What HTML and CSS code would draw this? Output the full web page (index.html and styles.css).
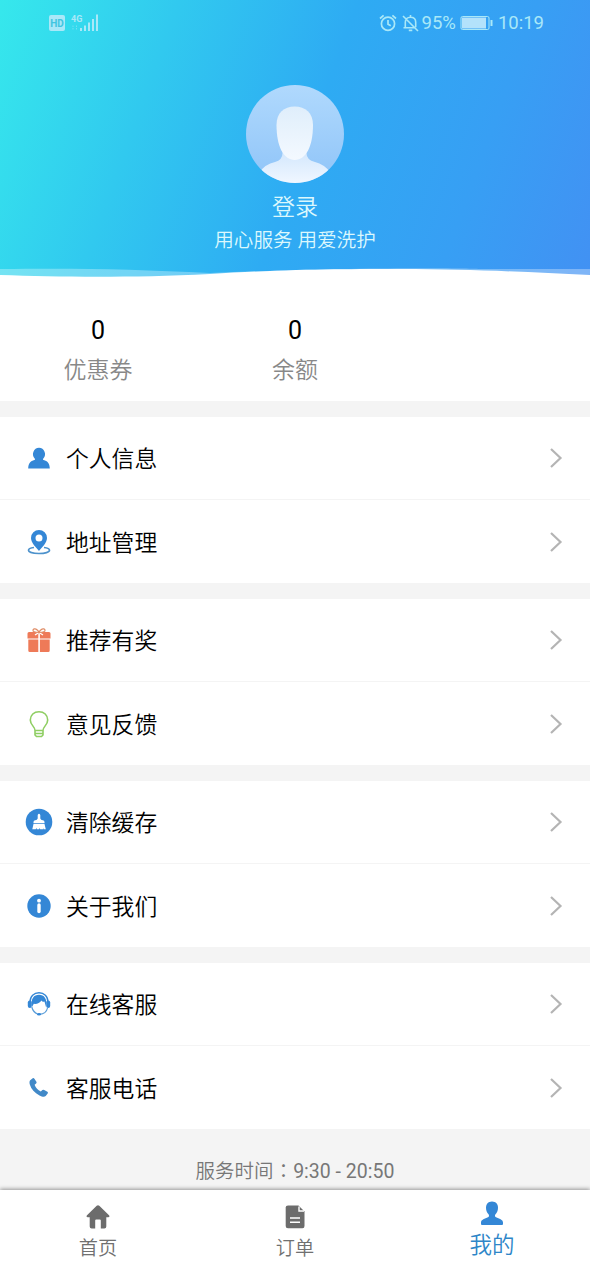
FILE: index.html
```html
<!DOCTYPE html>
<html lang="zh-CN">
<head>
<meta charset="utf-8">
<title>我的</title>
<link rel="stylesheet" href="styles.css">
</head>
<body>
<div class="app">
  <header class="hero">
    <svg class="wave" viewBox="0 0 590 12" preserveAspectRatio="none">
      <path d="M0 3C75 2 135 3 210 7C350 1 460 2 480 3H590V12H0Z" fill="#fff" fill-opacity=".32"/>
      <path d="M0 9C60 11 130 12 210 8C290 3 350 3 400 3C470 3 525 6 590 9V12H0Z" fill="#fff"/>
    </svg>
    <div class="status">
      <svg class="signal" width="52" height="20" viewBox="0 0 52 20">
        <rect x="1" y="2" width="16" height="16" rx="2" fill="currentColor"/>
        <text x="9" y="13.500" class="hd" text-anchor="middle">HD</text>
        <text x="23" y="8.500" class="net">4G</text>
        <path d="M25 12.500v4M28.500 12.500v4" stroke="currentColor" stroke-dasharray="1.500 1" opacity=".5"/>
        <path d="M33 15v3M37 12.500v5.500M41 9.500v8.500M45 6v12M49 1.500v16.500" stroke="currentColor" stroke-width="2"/>
      </svg>
      <div class="status-right">
        <svg width="18" height="18" viewBox="0 0 18 18" fill="none" stroke="currentColor" stroke-width="1.700"><circle cx="9" cy="9.800" r="6.600"/><path d="M9 6v4.200l2.800 1.600M1 4.500 4.600 1.300M17 4.500l-3.600-3.200"/></svg>
        <svg class="bell" width="17" height="18" viewBox="0 0 17 18" fill="none" stroke="currentColor" stroke-width="1.600"><path d="M3.300 13.500V8.200c0-3 2-5 5.200-5s5.200 2 5.200 5v5M1.500 13.700h11.700M8.500 1v2M6.800 16.400h3.500M1 2l15 15"/></svg>
        <span class="pct">95%</span>
        <svg class="battery" width="33" height="16" viewBox="0 0 33 16"><rect x="1" y="1.500" width="28" height="13" rx="1.500" fill="none" stroke="currentColor" stroke-width="1"/><rect x="2" y="2.500" width="24" height="11" fill="#b3e2fb"/><path d="M31.500 5v6" stroke="currentColor" stroke-width="2"/></svg>
        <span class="clock">10:19</span>
      </div>
    </div>
    <svg class="avatar" width="98" height="98" viewBox="0 0 98 98">
      <defs>
        <linearGradient id="disc" x1="0" y1="0" x2="0" y2="1"><stop offset="0" stop-color="#b0d9fd"/><stop offset="1" stop-color="#8fc4f8"/></linearGradient>
        <linearGradient id="bust" x1="0" y1="0" x2="0" y2="1"><stop offset="0" stop-color="#dfeefb"/><stop offset="1" stop-color="#f4f9ff"/></linearGradient>
        <linearGradient id="neck" x1="0" y1="0" x2="0" y2="1"><stop offset="0" stop-color="#cbe3fc"/><stop offset="1" stop-color="#f0f7ff"/></linearGradient>
        <clipPath id="round"><circle cx="49" cy="49" r="49"/></clipPath>
      </defs>
      <g clip-path="url(#round)">
        <rect width="98" height="98" fill="url(#disc)"/>
        <path d="M36.500 58V68Q36.500 75 29 77Q19 79 13 88V98H85V88Q78 79 69 77Q60.500 75 60.500 68V58Z" fill="url(#neck)"/>
        <path d="M30.500 40C30.500 28 38 21.500 48.700 21.500S67 28 67 40C67 61 60 75 48.700 75S30.500 61 30.500 40Z" fill="url(#bust)"/>
      </g>
    </svg>
    <div class="login">登录</div>
    <div class="slogan">用心服务 用爱洗护</div>
  </header>

  <section class="stats">
    <div class="stat"><b>0</b><span>优惠券</span></div>
    <div class="stat"><b>0</b><span>余额</span></div>
    <div class="stat"></div>
  </section>

  <section class="group">
    <div class="row">
      <svg class="icon" viewBox="0 0 28 28" fill="#3487d6"><path d="M14 3.800a6.300 6.300 0 0 1 4.300 10.600c-.7 1-.2 1.500 1 1.900 3.600 1.200 5.300 3.400 5.500 8.100H3.200c.2-4.700 1.900-6.900 5.500-8.100 1.200-.4 1.700-.9 1-1.900A6.300 6.300 0 0 1 14 3.800Z"/></svg>
      <span>个人信息</span><svg class="arrow" viewBox="0 0 14 22"><path d="M2 2l9.500 9L2 20"/></svg>
    </div>
    <div class="row">
      <svg class="icon" viewBox="0 0 28 28"><path d="M9 19.500C5 20 3.500 21.200 3.500 22.300c0 1.900 4.500 3.200 10.500 3.200s10.500-1.300 10.500-3.200c0-1.100-1.500-2.300-5.500-2.800" fill="none" stroke="#4d92cc" stroke-width="1.700"/><path fill-rule="evenodd" fill="#3487d6" d="M14 2a8 8 0 0 1 8 8c0 5-5 9-8 13-3-4-8-8-8-13a8 8 0 0 1 8-8Zm0 4.500a3.500 3.500 0 1 0 0 7 3.500 3.500 0 0 0 0-7Z"/></svg>
      <span>地址管理</span><svg class="arrow" viewBox="0 0 14 22"><path d="M2 2l9.500 9L2 20"/></svg>
    </div>
  </section>

  <section class="group">
    <div class="row">
      <svg class="icon" viewBox="0 0 28 28"><path d="M2.500 7.500q0-1.500 1.500-1.500h9.300v6.500H2.500ZM14.900 6h9.100q1.500 0 1.500 1.500v5H14.900ZM3.300 13.500H13.300V26H4.800q-1.500 0-1.500-1.500ZM14.900 13.500h9.800v11q0 1.500-1.500 1.500h-8.300Z" fill="#ee7a58"/><path d="M14 6.500l-4 2.500M14 6.500l4 2.500" stroke="#fff" stroke-width="1.300"/><path d="M14 6.500C9.500 6.500 7.500 5.300 8 4c1-2.500 5-.8 6 2.500 1-3.300 5-5 6-2.500 .5 1.300-1.500 2.500-6 2.500Z" fill="#fff" stroke="#df8c66" stroke-width="1.200"/></svg>
      <span>推荐有奖</span><svg class="arrow" viewBox="0 0 14 22"><path d="M2 2l9.500 9L2 20"/></svg>
    </div>
    <div class="row">
      <svg class="icon" viewBox="0 0 28 28" fill="none" stroke="#8fce63" stroke-width="1.600"><path d="M10 20.500c0-4-4.700-5.500-4.700-10.500C5.300 5 9 1.700 14 1.700s8.700 3.300 8.700 8.300c0 5-4.700 6.500-4.700 10.500ZM10 20.500V25l1.500 1.500h5L18 25v-4.500M10 23.500h8"/></svg>
      <span>意见反馈</span><svg class="arrow" viewBox="0 0 14 22"><path d="M2 2l9.500 9L2 20"/></svg>
    </div>
  </section>

  <section class="group">
    <div class="row">
      <svg class="icon" viewBox="0 0 28 28"><circle cx="14" cy="14" r="13.300" fill="#3487d6"/><path d="M12.700 7q1.300-2.500 2.600 0v3.500q.5 1.500 2.500 1.800 1.700.3 1.700 1.700v1.200h-11V14q0-1.400 1.700-1.700 2-.3 2.500-1.800ZM8.500 16h11l1.300 5.300h-2.300l-.5-1.500v1.500h-2.900l-.3-1.500-.6 1.500h-2.500v-1.500l-1 1.500H7.300Z" fill="#fff"/></svg>
      <span>清除缓存</span><svg class="arrow" viewBox="0 0 14 22"><path d="M2 2l9.500 9L2 20"/></svg>
    </div>
    <div class="row">
      <svg class="icon" viewBox="0 0 28 28"><circle cx="14" cy="14" r="11.700" fill="#3487d6"/><circle cx="14" cy="8.700" r="1.900" fill="#fff"/><path d="M14 13v6.500" stroke="#fff" stroke-width="3.400" stroke-linecap="round"/></svg>
      <span>关于我们</span><svg class="arrow" viewBox="0 0 14 22"><path d="M2 2l9.500 9L2 20"/></svg>
    </div>
  </section>

  <section class="group">
    <div class="row">
      <svg class="icon" viewBox="0 0 28 28"><path d="M5 12C5 6 9 2.800 14 2.800S23 6 23 12" fill="none" stroke="#3487d6" stroke-width="1.400"/><rect x="2.800" y="10.500" width="4" height="7.500" rx="2" fill="#3487d6"/><rect x="21.200" y="10.500" width="4" height="7.500" rx="2" fill="#3487d6"/><path d="M7 17C5.500 8.500 9 4.800 14 4.800S22.500 8.500 21 17L19.500 11.500Q17.500 12.500 16.500 10.500Q13.500 14.500 8.800 13.800Z" fill="#3487d6"/><path d="M6.800 17c1 4 3.200 6 5.700 7M22.500 18c-.8 3.800-4 6-8 6.300" fill="none" stroke="#5a9dd8" stroke-width="1.200"/><ellipse cx="14" cy="24.300" rx="2" ry="1.200" fill="#3487d6"/></svg>
      <span>在线客服</span><svg class="arrow" viewBox="0 0 14 22"><path d="M2 2l9.500 9L2 20"/></svg>
    </div>
    <div class="row">
      <svg class="icon" viewBox="0 0 28 28" fill="#4189c8"><path d="M5.200 6.200 7.700 4.300q1-.6 1.700.4l2 3q.6 1-.3 1.800l-1.500 1.200c1.200 3.200 3.200 5.300 6.200 6.800l1.600-1.400q.8-.8 1.800-.2l3.200 1.900q1 .7.300 1.700l-2 2.500c-1.200 1.200-3.500.9-6.200-.5C9.500 19 6.300 15.300 4.900 10.800 4.300 8.700 4.300 7.200 5.200 6.200Z"/></svg>
      <span>客服电话</span><svg class="arrow" viewBox="0 0 14 22"><path d="M2 2l9.500 9L2 20"/></svg>
    </div>
  </section>

  <div class="hours">服务时间<i lang="zh-TW">：</i><span>9:30 - 20:50</span></div>

  <nav class="tabs">
    <div class="tab">
      <svg width="26" height="26" viewBox="0 0 26 26" fill="#6c6c6c"><path d="M11.700 1.800q1.300-1.300 2.600 0L24 11.300q1.300 1.700-.8 2H21.300V22.500q0 2-2 2H15.800V16.500q0-1-1-1H11.200q-1 0-1 1V24.500H6.700q-2 0-2-2V13.300H2.800q-2.100-.3-.8-2Z"/></svg>
      <span>首页</span>
    </div>
    <div class="tab">
      <svg width="26" height="26" viewBox="0 0 26 26"><path d="M6 1.500h10.500l6 6V22q0 2.300-2 2.300H6q-2.300 0-2.300-2.300V3.500q0-2 2.300-2Z" fill="#6c6c6c"/><path d="M17 2.500v4.500h5M8 14h10M8 18.300h10" fill="none" stroke="#fff" stroke-width="1.400"/></svg>
      <span>订单</span>
    </div>
    <div class="tab active">
      <svg width="26" height="26" viewBox="0 0 26 26" fill="#3487d6"><path d="M13 .5c4 0 6 2.800 6 6.300 0 3-1 5-2.500 6.500-.8 1-.7 2.400.5 3 3 1.600 7 2.200 7 5.200v1.500q0 1-1 1H3q-1 0-1-1v-1.500c0-3 4-3.600 7-5.200 1.200-.6 1.300-2 .5-3C8 11.800 7 9.800 7 6.800 7 3.300 9 .5 13 .5Z"/></svg>
      <span>我的</span>
    </div>
  </nav>
</div>
</body>
</html>
```
FILE: styles.css
```css
* { box-sizing: border-box; }
body { margin: 0; background: #fff; font-family: Roboto, "Noto Sans CJK SC", sans-serif; font-weight: 350; }
.app { width: 590px; height: 1278px; display: flex; flex-direction: column; background: #f4f4f4; overflow: hidden; }
.hero { position: relative; height: 278px; flex: none; display: flex; flex-direction: column; align-items: center; color: #dcf8fd; background: linear-gradient(110deg, #36e8ec 0%, #31c9ef 26%, #2eabf3 52%, #379ff4 78%, #4291f3 100%); }
.wave { position: absolute; left: 0; bottom: 0; width: 590px; height: 12px; }
.status { width: 100%; height: 45px; padding: 0 46px 0 48px; display: flex; justify-content: space-between; align-items: center; color: #a9e8f8; font-weight: 400; }
.status-right { display: flex; align-items: center; font-size: 18.5px; }
.bell { margin-left: 5px; }
.pct { margin-left: 3px; }
.battery { margin-left: 4px; }
.clock { margin-left: 5px; }
.hd { font-size: 10px; font-weight: 700; fill: #3fc5e0; }
.net { font-size: 9px; font-weight: 700; fill: currentColor; }
.avatar { margin-top: 40px; flex: none; }
.login { margin-top: 9px; font-size: 23px; line-height: 32px; }
.slogan { margin-top: 3px; font-size: 19.6px; line-height: 28px; }
.stats { height: 123px; flex: none; background: #fff; display: grid; grid-template-columns: 196px 198px 196px; }
.stat { display: flex; flex-direction: column; align-items: center; padding-top: 37px; }
.stat b { font-weight: 400; font-size: 25px; line-height: 32px; color: #000; }
.stat span { margin-top: 8px; font-size: 23px; line-height: 32px; color: #888; }
.group { margin-top: 16px; height: 166px; flex: none; background: #fff; }
.row { display: flex; align-items: center; padding: 0 27px 0 25px; color: #000; font-size: 22.8px; }
.row:first-child { height: 83px; border-bottom: 1.5px solid #f4f4f4; }
.row:last-child { height: 83px; }
.icon { width: 28px; height: 28px; }
.row span { flex: 1; margin-left: 13px; padding-top: 4px; line-height: 32px; }
.arrow { width: 14px; height: 22px; fill: none; stroke: #b4b4b4; stroke-width: 2.2; }
.hours { flex: 1; padding-top: 27px; text-align: center; font-size: 19.5px; line-height: 28px; color: #777; }
.hours i { font-style: normal; font-family: "Noto Sans CJK TC", sans-serif; }
.hours span { font-weight: 400; font-size: 19.5px; }
.tabs { height: 88px; flex: none; background: #fff; box-shadow: 0 -1px 4px rgba(0, 0, 0, .4); display: grid; grid-template-columns: 196px 198px 196px; }
.tab { display: flex; flex-direction: column; align-items: center; padding-top: 14px; color: #707070; font-size: 19.2px; }
.tab span { margin-top: 5px; line-height: 28px; }
.tab.active { padding-top: 11px; color: #2e86c8; font-size: 22.5px; }
.tab.active span { margin-top: 4px; }
```
